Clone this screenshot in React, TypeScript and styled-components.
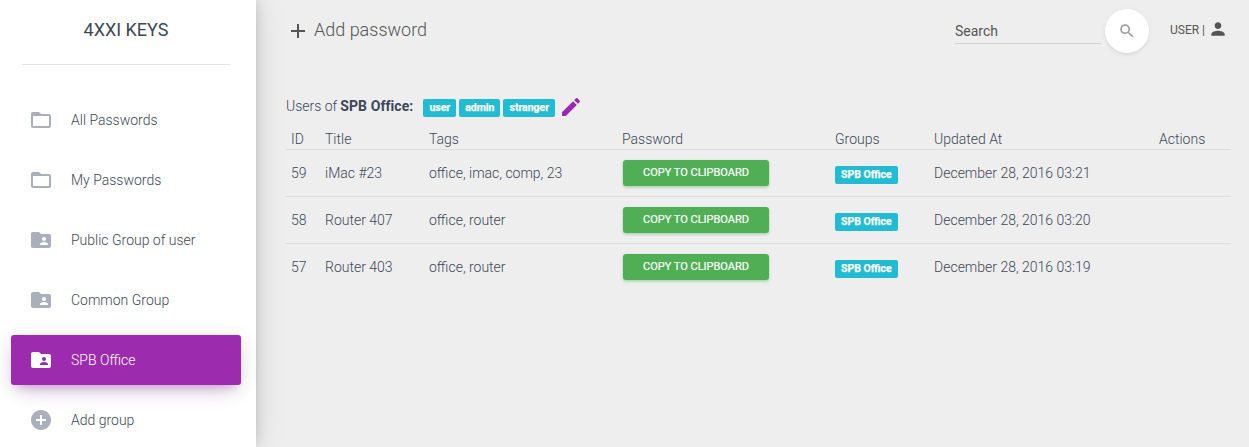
import React from 'react';
import styled, { createGlobalStyle } from 'styled-components';

const GlobalStyle = createGlobalStyle`
  * { box-sizing: border-box; }
  body {
    margin: 0;
    background: #eee;
    color: #3c4858;
    font-family: Roboto, "Liberation Sans", sans-serif;
    font-size: 14px;
    font-weight: 300;
    line-height: 20px;
    overflow: hidden;
  }
`;

const Page = styled.div`
  display: flex;
  height: 447px;
`;

const Sidebar = styled.aside`
  flex: none;
  width: 256px;
  background: #fff;
  box-shadow: 0 0 30px 0 rgba(0, 0, 0, 0.12), 1px 0 12px -2px rgba(0, 0, 0, 0.16);
`;

const Brand = styled.div`
  height: 65px;
  margin: 0 26px 0 22px;
  padding-top: 15px;
  border-bottom: 1px solid #e4e4e4;
  font-size: 18px;
  font-weight: 400;
  line-height: 30px;
  text-align: center;
`;

const Nav = styled.nav`
  display: flex;
  flex-direction: column;
  gap: 10px;
  margin: 30px 15px 0 11px;
`;

const NavItem = styled.a<{ $active?: boolean }>`
  display: flex;
  align-items: center;
  gap: 18px;
  height: 50px;
  padding: 0 18px;
  border-radius: 3px;
  color: ${(p) => (p.$active ? '#fff' : '#3c4858')};
  background: ${(p) => (p.$active ? '#9c2cad' : 'transparent')};
  box-shadow: ${(p) =>
    p.$active
      ? '0 12px 20px -10px rgba(156, 39, 176, 0.28), 0 4px 20px 0 rgba(0, 0, 0, 0.12), 0 7px 8px -5px rgba(156, 39, 176, 0.2)'
      : 'none'};

  svg {
    color: ${(p) => (p.$active ? '#fff' : '#a9afbb')};
  }
`;

const Main = styled.main`
  flex: 1;
  padding: 0 18px 0 30px;
`;

const Topbar = styled.header`
  display: flex;
  align-items: center;
  height: 62px;
  color: #555;
`;

const AddLink = styled.a`
  display: flex;
  align-items: center;
  gap: 4px;
  margin-right: auto;
  font-size: 18px;

  span {
    margin-top: -2px;
  }
`;

const SearchField = styled.div`
  width: 146px;
  height: 26px;
  margin: 0 4px 0 0;
  padding-top: 3px;
  border-bottom: 1px solid #d0d0d0;
  font-weight: 400;
`;

const SearchButton = styled.button`
  display: flex;
  align-items: center;
  justify-content: center;
  width: 44px;
  height: 44px;
  margin-right: 21px;
  padding: 0;
  border: 0;
  border-radius: 50%;
  background: #fff;
  color: #999;
  box-shadow: 0 2px 2px 0 rgba(153, 153, 153, 0.14), 0 1px 5px 0 rgba(153, 153, 153, 0.12);
`;

const Account = styled.div`
  display: flex;
  align-items: center;
  gap: 3px;
  margin: -3px 3px 0 0;
  font-size: 12px;
  font-weight: 400;

  svg {
    margin-top: -1px;
  }
`;

const GroupUsers = styled.div`
  display: flex;
  align-items: center;
  height: 24px;
  margin-top: 32px;
  margin-bottom: 1px;

  b {
    margin: 0 10px 0 3px;
    font-weight: 700;
    letter-spacing: 0.08px;
  }
`;

const UserBadges = styled.div`
  display: flex;
  gap: 3px;
  margin: 4px 4px 0 0;
`;

const Badge = styled.span`
  display: inline-block;
  height: 18px;
  padding: 0 6px;
  border-radius: 2px;
  background: #21bcd4;
  color: #fff;
  font-size: 10.5px;
  font-weight: 700;
  line-height: 17px;
  white-space: nowrap;
  -webkit-text-stroke: 0.25px #fff;
`;

const Pencil = styled.span`
  display: flex;
  padding-top: 2px;
  color: #9c27b0;
`;

const Row = styled.div<{ $head?: boolean }>`
  display: grid;
  grid-template-columns: 34px 104px 193px 213px 99px 225px 1fr;
  align-items: center;
  height: ${(p) => (p.$head ? '31px' : '47px')};
  padding: ${(p) => (p.$head ? '10px 0 0 5px' : '0 0 0 5px')};
  border-bottom: 1px solid #dcdcdc;

  &:last-child {
    border-bottom-color: transparent;
  }
`;

const GroupCell = styled.div`
  display: flex;
  padding-top: 4px;
`;

const CopyButton = styled.button`
  width: 146px;
  height: 26px;
  margin-left: 1px;
  padding: 0;
  border: 0;
  border-radius: 3px;
  background: #50af55;
  color: #fff;
  font: 400 11px/24px Roboto, "Liberation Sans", sans-serif;
  -webkit-text-stroke: 0.2px #fff;
  box-shadow: 0 2px 2px 0 rgba(76, 175, 80, 0.14), 0 1px 3px 0 rgba(76, 175, 80, 0.35);
`;

const FOLDER =
  'M20 6h-8l-2-2H4c-1.1 0-1.99.9-1.99 2L2 18c0 1.1.9 2 2 2h16c1.1 0 2-.9 2-2V8c0-1.1-.9-2-2-2z';

const icons = {
  folder: FOLDER + 'm0 12H4V8h16v10z',
  shared:
    FOLDER +
    'm-5 3c1.1 0 2 .9 2 2s-.9 2-2 2-2-.9-2-2 .9-2 2-2zm4 8h-8v-1c0-1.33 2.67-2 4-2s4 .67 4 2v1z',
  addCircle:
    'M12 2C6.48 2 2 6.48 2 12s4.48 10 10 10 10-4.48 10-10S17.52 2 12 2zm5 11h-4v4h-2v-4H7v-2h4V7h2v4h4v2z',
  add: 'M19 13h-6v6h-2v-6H5v-2h6V5h2v6h6v2z',
  edit: 'M3 17.25V21h3.75L17.81 9.94l-3.75-3.75L3 17.25zM20.71 7.04c.39-.39.39-1.02 0-1.41l-2.34-2.34c-.39-.39-1.02-.39-1.41 0l-1.83 1.83 3.75 3.75 1.83-1.83z',
  person:
    'M12 12c2.21 0 4-1.79 4-4s-1.79-4-4-4-4 1.79-4 4 1.79 4 4 4zm0 2c-2.67 0-8 1.34-8 4v2h16v-2c0-2.66-5.33-4-8-4z',
  search:
    'M15.5 14h-.79l-.28-.27C15.41 12.59 16 11.11 16 9.5 16 5.91 13.09 3 9.5 3S3 5.91 3 9.5 5.91 16 9.5 16c1.61 0 3.09-.59 4.23-1.57l.27.28v.79l5 4.99L20.49 19l-4.99-5zm-6 0C7.01 14 5 11.99 5 9.5S7.01 5 9.5 5 14 7.01 14 9.5 11.99 14 9.5 14z',
};

type IconName = keyof typeof icons;

const Icon = ({ name, size = 24 }: { name: IconName; size?: number }) => (
  <svg width={size} height={size} viewBox="0 0 24 24" fill="currentColor" aria-hidden="true">
    <path d={icons[name]} />
  </svg>
);

const navItems: { label: string; icon: IconName; active?: boolean }[] = [
  { label: 'All Passwords', icon: 'folder' },
  { label: 'My Passwords', icon: 'folder' },
  { label: 'Public Group of user', icon: 'shared' },
  { label: 'Common Group', icon: 'shared' },
  { label: 'SPB Office', icon: 'shared', active: true },
  { label: 'Add group', icon: 'addCircle' },
];

const columns = ['ID', 'Title', 'Tags', 'Password', 'Groups', 'Updated At', 'Actions'];

const passwords = [
  { id: 59, title: 'iMac #23', tags: 'office, imac, comp, 23', updated: 'December 28, 2016 03:21' },
  { id: 58, title: 'Router 407', tags: 'office, router', updated: 'December 28, 2016 03:20' },
  { id: 57, title: 'Router 403', tags: 'office, router', updated: 'December 28, 2016 03:19' },
];

export default function App() {
  return (
    <Page>
      <GlobalStyle />
      <Sidebar>
        <Brand>4XXI KEYS</Brand>
        <Nav>
          {navItems.map((item) => (
            <NavItem key={item.label} $active={item.active}>
              <Icon name={item.icon} />
              <span>{item.label}</span>
            </NavItem>
          ))}
        </Nav>
      </Sidebar>
      <Main>
        <Topbar>
          <AddLink>
            <Icon name="add" />
            <span>Add password</span>
          </AddLink>
          <SearchField>Search</SearchField>
          <SearchButton aria-label="Search">
            <Icon name="search" size={18} />
          </SearchButton>
          <Account>
            <span>USER |</span>
            <Icon name="person" size={20} />
          </Account>
        </Topbar>
        <GroupUsers>
          <span>Users of</span>
          <b>SPB Office:</b>
          <UserBadges>
            <Badge>user</Badge>
            <Badge>admin</Badge>
            <Badge>stranger</Badge>
          </UserBadges>
          <Pencil>
            <Icon name="edit" />
          </Pencil>
        </GroupUsers>
        <div>
          <Row $head>
            {columns.map((c) => (
              <span key={c}>{c}</span>
            ))}
          </Row>
          {passwords.map((p) => (
            <Row key={p.id}>
              <span>{p.id}</span>
              <span>{p.title}</span>
              <span>{p.tags}</span>
              <CopyButton>COPY TO CLIPBOARD</CopyButton>
              <GroupCell>
                <Badge>SPB Office</Badge>
              </GroupCell>
              <span>{p.updated}</span>
              <span />
            </Row>
          ))}
        </div>
      </Main>
    </Page>
  );
}
